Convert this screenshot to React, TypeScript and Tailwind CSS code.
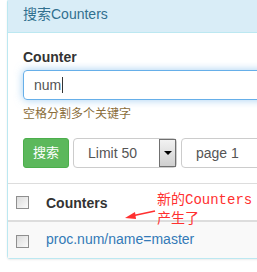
import React from "react";

const Check = () => (
  <div className="w-[13px] h-[13px] border border-[#8f8f8f] bg-gradient-to-br from-[#dcdcdc] to-[#fbfbfb] shrink-0" />
);

export default function App() {
  const font = { fontFamily: '"Liberation Sans", Arial, "Noto Sans CJK SC", sans-serif' };
  return (
    <div className="w-[257px] h-[272px] overflow-hidden bg-white relative" style={font}>
      <div className="ml-[7px] w-[420px] border border-[#bce8f1] rounded-[3px] shadow-[0_1px_2px_rgba(0,0,0,0.08)] bg-white -mt-[1px]">
        <div className="h-[33px] bg-[#d9edf7] border-b border-[#bce8f1] pl-[15px] pt-[4px] text-[14px] leading-[20px] text-[#31708f]">
          搜索Counters
        </div>
        <div className="pl-[15px] pt-[14px] pb-[15px]">
          <div className="text-[14px] leading-[20px] font-bold text-[#333] mb-[3px]">Counter</div>
          <div className="h-[30px] border border-[#66afe9] rounded-[4px] shadow-[0_0_8px_rgba(102,175,233,0.6)] flex items-center pl-[10px] text-[14px] text-[#555]">
            num<span className="w-px h-[16px] bg-[#333] ml-[1px]" />
          </div>
          <div className="mt-[4px] text-[12px] leading-[20px] text-[#8a6d3b]">空格分割多个关键字</div>
          <div className="mt-[14px] flex items-center h-[30px]">
            <div className="w-[46px] h-[30px] rounded-[3px] bg-[#5cb85c] border border-[#4cae4c] text-white text-[13px] flex items-center justify-center">
              搜索
            </div>
            <div className="ml-[4px] w-[104px] h-[30px] border border-[#ccc] rounded-[4px] flex items-center justify-between text-[14px] text-[#555]">
              <span className="pl-[14px]">Limit 50</span>
              <div className="w-[17px] h-[28px] border border-[#707070] bg-gradient-to-b from-[#f2f2f2] to-[#cfcfcf] flex items-center justify-center">
                <div className="w-0 h-0 border-l-[4px] border-r-[4px] border-t-[4px] border-l-transparent border-r-transparent border-t-black" />
              </div>
            </div>
            <div className="ml-[4px] w-[120px] h-[30px] border border-[#ccc] rounded-[4px] flex items-center pl-[14px] text-[14px] text-[#555]">
              page 1
            </div>
          </div>
        </div>
        <div className="border-t border-[#ddd]">
          <div className="h-[38px] flex items-center border-b-2 border-[#ddd]">
            <div className="w-[38px] pl-[8px] flex items-center"><Check /></div>
            <div className="text-[14px] font-bold text-[#333] pt-[2px]">Counters</div>
          </div>
          <div className="h-[36px] flex items-center bg-[#f9f9f9]">
            <div className="w-[38px] pl-[8px] flex items-center pt-[2px]"><Check /></div>
            <div className="text-[14px] text-[#337ab7] -mt-[2px]">proc.num/name=master</div>
          </div>
        </div>
      </div>
      <div
        className="absolute left-[157px] top-[191px] text-[14px] leading-[19px] text-[#ff3030]"
        style={{ fontFamily: '"Liberation Mono", "Noto Sans CJK SC", monospace' }}
      >
        <div>新的Counters</div>
        <div>产生了</div>
      </div>
      <svg className="absolute left-[120px] top-[205px]" width="40" height="20" viewBox="0 0 40 20">
        <path d="M35 6 L14 10.5" stroke="#ff3030" strokeWidth="1.6" fill="none" />
        <path d="M5 13 L15 7 L16 14 Z" fill="#ff3030" />
      </svg>
    </div>
  );
}
